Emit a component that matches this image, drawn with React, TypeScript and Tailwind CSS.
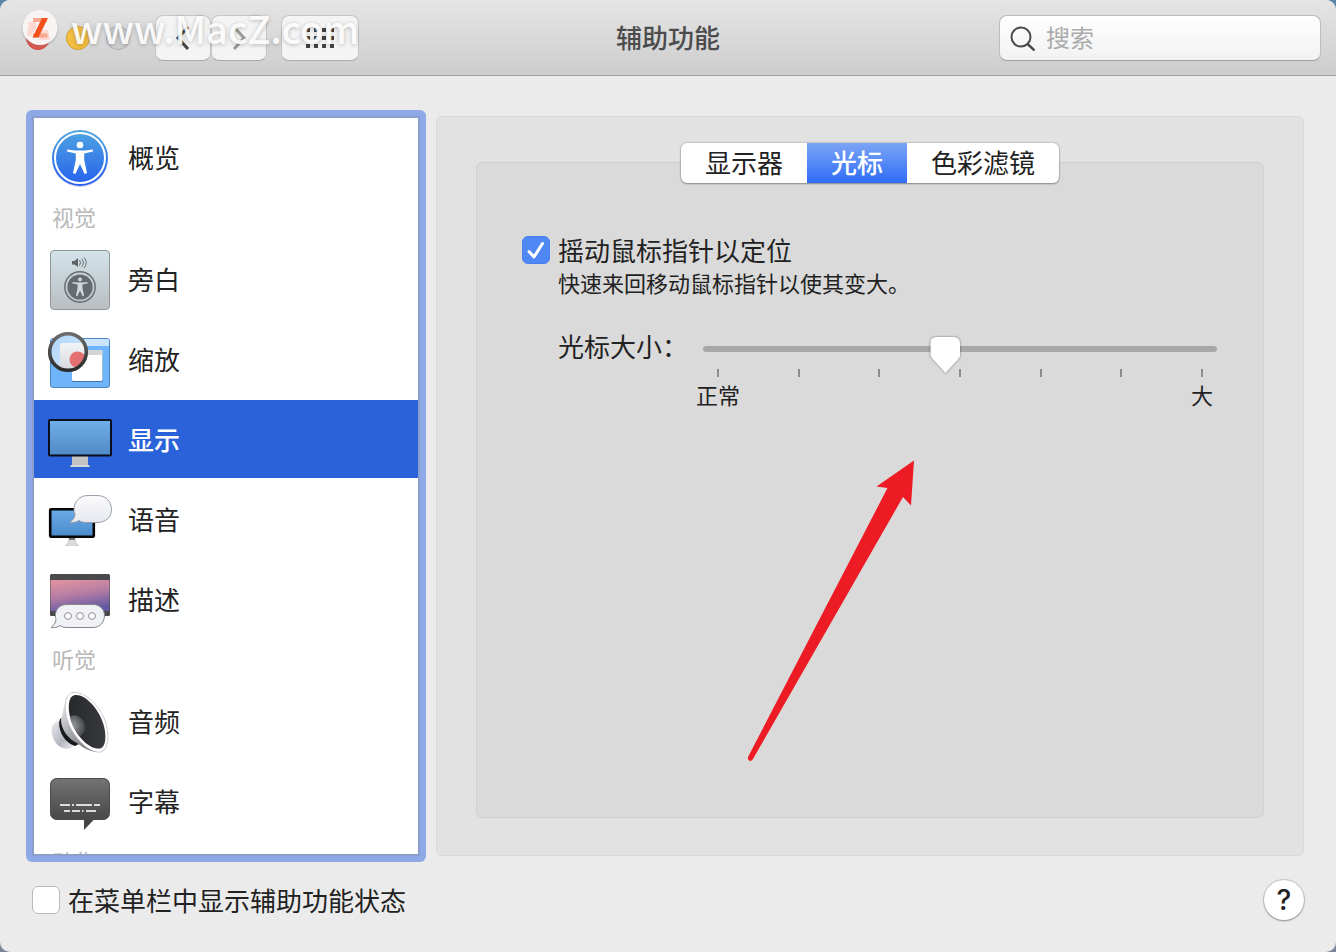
import { useState, type ReactNode } from "react";
import clsx from "clsx";

// Accessibility figure shared by the overview and voice-over icons, centred on 0,0.
function Figure({ fill }: { fill: string }) {
  return (
    <g fill={fill}>
      <circle cx="0" cy="-13" r="3.3" />
      <path d="M-13 -8.6 L-5 -7.6 H5 L13 -8.6 V-6.4 L4.2 -4.4 V2 L7 15 L4.6 16 L0 6 L-4.6 16 L-7 15 L-4.2 2 V-4.4 L-13 -6.4Z" />
    </g>
  );
}

function Icon({ children }: { children: ReactNode }) {
  return (
    <svg viewBox="0 0 64 64" fill="none" className="size-16 flex-none" aria-hidden>
      {children}
    </svg>
  );
}

function OverviewIcon() {
  return (
    <Icon>
      <defs>
        <linearGradient id="ov" x1="0" y1="0" x2="0" y2="1">
          <stop offset="0" stopColor="#4fa5e0" />
          <stop offset="1" stopColor="#2560ee" />
        </linearGradient>
      </defs>
      <circle cx="32" cy="34" r="28" fill="#7d80e8" opacity="0.4" />
      <circle cx="32" cy="33" r="28" fill="url(#ov)" />
      <circle cx="32" cy="33" r="25" stroke="#fff" strokeWidth="2" />
      <g transform="translate(32 33)">
        <Figure fill="#fff" />
      </g>
    </Icon>
  );
}

function VoiceOverIcon() {
  return (
    <Icon>
      <defs>
        <linearGradient id="vo" x1="0" y1="0" x2="0" y2="1">
          <stop offset="0" stopColor="#d3e3ea" />
          <stop offset="1" stopColor="#b9bec1" />
        </linearGradient>
      </defs>
      <rect x="2.5" y="3.5" width="59" height="59" rx="3.5" fill="url(#vo)" stroke="#8e9699" />
      <path d="M24 14 H26.5 L30 11 V20 L26.5 17.5 H24Z" fill="#5d6568" />
      <path d="M31.5 13 Q33.5 15.7 31.5 18.5 M33.8 11.8 Q37 15.7 33.8 19.8 M36 10.5 Q40.5 15.7 36 21" stroke="#5d6568" strokeWidth="0.9" />
      <circle cx="32" cy="40" r="15.2" stroke="#656c6f" strokeWidth="1.4" />
      <circle cx="32" cy="40" r="12.6" fill="#656c6f" />
      <g transform="translate(32 40) scale(0.58)">
        <Figure fill="#d3dade" />
      </g>
    </Icon>
  );
}

function ZoomIcon() {
  return (
    <Icon>
      <defs>
        <linearGradient id="zr" x1="0" y1="0" x2="0" y2="1">
          <stop offset="0" stopColor="#6b6b6b" />
          <stop offset="1" stopColor="#2b2b2b" />
        </linearGradient>
        <linearGradient id="zl" x1="0" y1="0" x2="1" y2="1">
          <stop offset="0" stopColor="#a9d3fb" />
          <stop offset="1" stopColor="#d8e9fa" />
        </linearGradient>
        <linearGradient id="zw" x1="0" y1="0" x2="0" y2="1">
          <stop offset="0" stopColor="#f2f4f6" />
          <stop offset="1" stopColor="#d3d5da" />
        </linearGradient>
        <clipPath id="zc">
          <circle cx="20" cy="25" r="17" />
        </clipPath>
      </defs>
      <rect x="2.5" y="11.5" width="59" height="49" rx="2.5" fill="#6fb4f8" stroke="#4a86c4" />
      <path d="M3 19 V14 Q3 12 5 12 H59 Q61 12 61 14 V19Z" fill="#cbe4fd" />
      <rect x="24" y="24" width="31" height="31" rx="1.5" fill="#3d76b5" />
      <rect x="24" y="23" width="30.5" height="31" rx="1.5" fill="#fff" />
      <rect x="24" y="23" width="30.5" height="5" rx="1" fill="#d4d4d4" />
      <g clipPath="url(#zc)">
        <rect width="40" height="45" fill="url(#zl)" />
        <rect x="12" y="16" width="30" height="30" rx="3" fill="url(#zw)" />
        <circle cx="29.5" cy="32.5" r="8" fill="#e47072" />
      </g>
      <circle cx="20" cy="25" r="18.3" stroke="url(#zr)" strokeWidth="3.6" />
    </Icon>
  );
}

function DisplayIcon() {
  return (
    <Icon>
      <defs>
        <linearGradient id="di" x1="0" y1="0" x2="0" y2="1">
          <stop offset="0" stopColor="#70afea" />
          <stop offset="1" stopColor="#5089c6" />
        </linearGradient>
      </defs>
      <rect x="24" y="49" width="16" height="9" fill="#c4c4c4" />
      <path d="M23 58 H41 L42 60 H22Z" fill="#d6d6d6" />
      <rect x="1" y="13" width="62" height="35.5" rx="1" fill="url(#di)" stroke="#0b0e1c" strokeWidth="2" />
    </Icon>
  );
}

function SpeechIcon() {
  return (
    <Icon>
      <defs>
        <linearGradient id="sb" x1="0" y1="0" x2="0" y2="1">
          <stop offset="0" stopColor="#fbfbfc" />
          <stop offset="1" stopColor="#e6e8ee" />
        </linearGradient>
        <linearGradient id="sm" x1="0" y1="0" x2="0" y2="1">
          <stop offset="0" stopColor="#69aae8" />
          <stop offset="1" stopColor="#4c8bca" />
        </linearGradient>
      </defs>
      <path d="M21 51 H27 L28 56 L31 58.5 H17 L20 56Z" fill="#dcdcdc" stroke="#c2c2c2" strokeWidth="0.6" />
      <path d="M21 51 H27 V53 H21Z" fill="#777" />
      <rect x="2.2" y="22.2" width="43.6" height="27.6" rx="1" fill="url(#sm)" stroke="#050505" strokeWidth="2.6" />
      <path
        d="M40 8.5 H49 C58 8.5 63.5 14.5 63.5 22.5 C63.5 30 58 35.5 49 35.5 H39 C36 35.5 33 35 31 33.5 C28.5 35.2 25 36 21.5 35.5 C25 33 26.5 31 27 27.5 C26.3 25.5 26 24 26 22.5 C26 14.5 31.5 8.5 40 8.5Z"
        fill="url(#sb)"
        stroke="#8f96a0"
        strokeWidth="0.9"
      />
    </Icon>
  );
}

function DescriptionsIcon() {
  return (
    <Icon>
      <defs>
        <linearGradient id="de" x1="0.3" y1="0" x2="0.6" y2="1">
          <stop offset="0" stopColor="#dd919f" />
          <stop offset="0.45" stopColor="#b67da4" />
          <stop offset="1" stopColor="#5e57a2" />
        </linearGradient>
      </defs>
      <rect x="2" y="7" width="60" height="42" rx="1.5" fill="#4a4a4d" />
      <rect x="2.5" y="13" width="59" height="31" fill="url(#de)" />
      <path
        d="M19 37.5 H45 C52 37.5 56.5 42.5 56.5 48.5 C56.5 55 52 60.5 45 60.5 H19 C16 60.5 14 60 12 58.5 C9.5 60.5 6.5 61 3 60.5 C6 58 7.5 56 8 52.5 C7.5 51 7.3 50 7.3 48.5 C7.5 42 12 37.5 19 37.5Z"
        fill="#f0f1f5"
        stroke="#85878f"
      />
      <circle cx="20" cy="49" r="3.4" fill="#fff" stroke="#8d8d93" />
      <circle cx="32" cy="49" r="3.4" fill="#fff" stroke="#8d8d93" />
      <circle cx="44" cy="49" r="3.4" fill="#fff" stroke="#8d8d93" />
    </Icon>
  );
}

function AudioIcon() {
  return (
    <Icon>
      <defs>
        <linearGradient id="am" x1="0" y1="0" x2="1" y2="1">
          <stop offset="0" stopColor="#ececf0" />
          <stop offset="0.6" stopColor="#b4b5bf" />
          <stop offset="1" stopColor="#f2f2f4" />
        </linearGradient>
        <linearGradient id="ac" x1="0" y1="0" x2="0.7" y2="1">
          <stop offset="0" stopColor="#f5f5f6" />
          <stop offset="0.5" stopColor="#aeb0b4" />
          <stop offset="1" stopColor="#77797d" />
        </linearGradient>
        <linearGradient id="ad" x1="0" y1="0" x2="1" y2="0">
          <stop offset="0" stopColor="#1e1f21" />
          <stop offset="1" stopColor="#3b3c40" />
        </linearGradient>
        <radialGradient id="ab" cx="0.35" cy="0.4" r="0.7">
          <stop offset="0" stopColor="#9a9ca0" />
          <stop offset="1" stopColor="#3c3d41" />
        </radialGradient>
        <clipPath id="ak">
          <path d="M27 6 C37 5 50 19 55 34 C59 46 58 58 52 59.5 C42 61 29 48 23.500 33 C19 20 20 7 27 6Z" />
        </clipPath>
      </defs>
      <path d="M11 32 C5 34 3 37 3.5 43 C5 53 11 60 20 60 C23 60 25 58 26 56Z" fill="url(#am)" />
      <path d="M12 30 C9 37 14 53 27 57 L31 55 L16 28Z" fill="#18191b" />
      <path d="M18 8 C15 22 14 27 13 31 C13 40 20 50 29 54 C36 60 44 63 50 63Z" fill="url(#ac)" />
      <path d="M25 3.5 C37 2 52 17 57.5 33 C62 48 60 61.5 52.5 63 C41 64.5 26 49 20 33 C15 18 17 4.5 25 3.5Z" fill="#fff" stroke="#b5b7ba" strokeWidth="0.7" />
      <g clipPath="url(#ak)">
        <rect width="64" height="64" fill="url(#ad)" />
        <ellipse cx="28" cy="37" rx="9" ry="11" transform="rotate(-27 28 37)" fill="url(#ab)" />
      </g>
    </Icon>
  );
}

function CaptionsIcon() {
  return (
    <Icon>
      <defs>
        <linearGradient id="cp" x1="0" y1="0" x2="0" y2="1">
          <stop offset="0" stopColor="#737373" />
          <stop offset="1" stopColor="#484848" />
        </linearGradient>
      </defs>
      <path d="M36 50 V61 L46.5 50Z" fill="#454545" />
      <rect x="2.5" y="9.5" width="59" height="41" rx="6" fill="url(#cp)" stroke="#4b4b4b" />
      <path d="M12 36 H22 M24 36 H26 M28 36 H44 M46 36 H52 M16 42 H22 M24 42 H32 M34 42 H35.5 M38 42 H48" stroke="#dcdcdc" strokeWidth="2" />
    </Icon>
  );
}

const sections: { title?: string; items: { name: string; icon: ReactNode }[] }[] = [
  { items: [{ name: "概览", icon: <OverviewIcon /> }] },
  {
    title: "视觉",
    items: [
      { name: "旁白", icon: <VoiceOverIcon /> },
      { name: "缩放", icon: <ZoomIcon /> },
      { name: "显示", icon: <DisplayIcon /> },
      { name: "语音", icon: <SpeechIcon /> },
      { name: "描述", icon: <DescriptionsIcon /> },
    ],
  },
  {
    title: "听觉",
    items: [
      { name: "音频", icon: <AudioIcon /> },
      { name: "字幕", icon: <CaptionsIcon /> },
    ],
  },
  // Scrolled out of view apart from the top of its heading.
  { title: "动作", items: [] },
];

const TABS = ["显示器", "光标", "色彩滤镜"];

const toolButton =
  "flex h-[46px] items-center justify-center rounded-lg border border-[#c6c6c6] border-b-[#aaa] bg-[#f4f4f4]";

function Toolbar() {
  return (
    <header className="relative grid h-19 flex-none grid-cols-[1fr_auto_1fr] items-center border-b border-[#a4a4a4] bg-linear-to-b from-[#e5e5e5] to-[#cdcdcd] px-[15px]">
      <div className="flex items-center pl-[11px]">
        <div className="flex gap-4">
          <button aria-label="关闭" className="size-6 rounded-full border border-[#c9493f] bg-[#e0574e]" />
          <button aria-label="最小化" className="size-6 rounded-full border border-[#d3a02f] bg-[#f4bf42]" />
          <button aria-label="缩放窗口" className="size-6 rounded-full border border-[#b0b0b0] bg-[#cfcfcf]" />
        </div>
        <button aria-label="后退" className={clsx(toolButton, "ml-[25px] w-14")}>
          <svg viewBox="0 0 16 24" className="h-6 w-4" fill="none" stroke="#444" strokeWidth="3" aria-hidden>
            <path d="M13 1 L3 12 L13 23" />
          </svg>
        </button>
        <button aria-label="前进" className={clsx(toolButton, "w-14")}>
          <svg viewBox="0 0 16 24" className="h-6 w-4" fill="none" stroke="#9a9a9a" strokeWidth="3" aria-hidden>
            <path d="M3 1 L13 12 L3 23" />
          </svg>
        </button>
        <button aria-label="显示全部" className={clsx(toolButton, "ml-3.5 w-[78px]")}>
          <svg viewBox="0 0 28 20" className="h-5 w-7" fill="none" stroke="#444" strokeWidth="4" strokeDasharray="4 4" aria-hidden>
            <path d="M0 2 H28 M0 10 H28 M0 18 H28" />
          </svg>
        </button>
      </div>
      <h1 className="pb-0.5 text-[26px] leading-8 font-medium text-[#4c4c4c]">辅助功能</h1>
      <label className="flex h-[46px] w-[322px] items-center gap-2.5 justify-self-end rounded-lg border border-[#bdbdbd] border-b-[#a0a0a0] bg-linear-to-b from-white to-[#f2f2f2] pl-2.5">
        <svg viewBox="0 0 26 26" className="size-[26px] flex-none" fill="none" stroke="#4a4a4a" strokeWidth="2" aria-hidden>
          <circle cx="11" cy="12" r="9.5" />
          <path d="M17.5 19 L24.5 25.5" strokeWidth="2.4" />
        </svg>
        <input
          type="text"
          aria-label="搜索"
          placeholder="搜索"
          className="min-w-0 flex-1 bg-transparent pb-0.5 text-2xl outline-none placeholder:text-[#ababab]"
        />
      </label>
      <Watermark />
    </header>
  );
}

function Watermark() {
  return (
    <div className="pointer-events-none absolute top-1 left-5 flex items-center gap-[11px]">
      <svg viewBox="0 0 40 48" className="h-12 w-10" fill="none" aria-hidden>
        <circle cx="20" cy="25" r="18.5" fill="#777" opacity="0.2" />
        <circle cx="20" cy="23.5" r="17.5" fill="#f7f4f3" />
        <path d="M9 18 H16 V24 L11 32 H7Z M19 26 H28 L30 36 H20Z" fill="#fbd9d2" />
        <path d="M13 14 H27 V18 H13Z M13 29.5 H27.5 V33.5 H13Z" fill="#f9a78e" />
        <path d="M22 14 H28 L18.5 33.5 H12.5Z" fill="#f5511e" />
      </svg>
      <span className="font-['Noto_Sans_CJK_SC',sans-serif] text-[38px] leading-12 font-medium text-white/90 [text-shadow:0_1px_4px_rgb(0_0_0/0.25)]">
        www.MacZ.com
      </span>
    </div>
  );
}

function Sidebar() {
  const [current, setCurrent] = useState("显示");

  return (
    <nav className="w-[400px] flex-none rounded-md bg-[#8ea9e6] p-1.5">
      <div className="h-full overflow-hidden border-2 border-[#8c9fca] bg-white">
        {sections.map((section, i) => (
          <section key={i}>
            {section.title && <h2 className="h-[42px] pl-4.5 text-[22px] leading-9 text-[#b9b9b9]">{section.title}</h2>}
            <ul>
              {section.items.map(({ name, icon }) => (
                <li key={name} className="h-20">
                  <button
                    onClick={() => setCurrent(name)}
                    className={clsx(
                      "flex h-[78px] w-full items-center gap-4 pl-3.5 text-[26px]",
                      current === name ? "bg-[#2a63d9] font-medium text-white" : "text-[#222]",
                    )}
                  >
                    {icon}
                    <span className="pb-0.5">{name}</span>
                  </button>
                </li>
              ))}
            </ul>
          </section>
        ))}
      </div>
    </nav>
  );
}

function Checkbox({ id, defaultChecked }: { id: string; defaultChecked?: boolean }) {
  return (
    <span className="grid flex-none">
      <input
        id={id}
        type="checkbox"
        defaultChecked={defaultChecked}
        className="peer col-start-1 row-start-1 size-7 appearance-none rounded-md border border-[#bcbcbc] bg-white checked:border-[#4a80ee] checked:bg-[#4f87f5]"
      />
      <svg
        viewBox="0 0 28 28"
        className="pointer-events-none invisible col-start-1 row-start-1 size-7 peer-checked:visible"
        fill="none"
        stroke="#fff"
        strokeWidth="3"
        strokeLinecap="round"
        strokeLinejoin="round"
        aria-hidden
      >
        <path d="M7 15.5 L12 21 L20.5 7.5" />
      </svg>
    </span>
  );
}

function CursorSize() {
  return (
    <div className="flex gap-[15px] pr-[46px] pl-[81px]">
      <label htmlFor="cursor-size" className="text-[26px] leading-8">
        光标大小：
      </label>
      <div className="min-w-0 flex-1">
        <div className="grid items-center pt-[7px]">
          <div className="col-start-1 row-start-1 mb-3 h-1.5 rounded-full bg-[#a8a8a8]" />
          {/* The shadow sits on the input because the thumb itself is clipped to a pointer. */}
          <input
            id="cursor-size"
            type="range"
            defaultValue={47}
            className="col-start-1 row-start-1 h-9 w-full appearance-none bg-transparent drop-shadow-[0_0_1px_rgb(0_0_0/0.5)] [&::-webkit-slider-thumb]:h-9 [&::-webkit-slider-thumb]:w-[30px] [&::-webkit-slider-thumb]:appearance-none [&::-webkit-slider-thumb]:rounded-md [&::-webkit-slider-thumb]:bg-white [&::-webkit-slider-thumb]:[clip-path:polygon(0_0,100%_0,100%_52%,92%_62%,50%_100%,8%_62%,0_52%)]"
          />
        </div>
        <div className="-mt-1 flex justify-between px-3.5">
          {Array.from({ length: 7 }).map((_, i) => (
            <span key={i} className="h-2 w-0.5 bg-[#8c8c8c]" />
          ))}
        </div>
        <div className="-mx-[7px] mt-px flex justify-between text-[22px] leading-8">
          <span className="w-11 text-center">正常</span>
          <span className="w-11 text-center">大</span>
        </div>
      </div>
    </div>
  );
}

function Arrow() {
  return (
    <svg viewBox="0 0 168 302" className="pointer-events-none absolute top-[297px] left-[270px] h-[302px] w-[168px]" aria-hidden>
      <path
        d="M167 0.5 L129.5 26.5 L140.5 28 L1 297 Q0.5 300 3 301 Q5 301 6 299 L156 37 L164 45.5Z"
        fill="#ed1c24"
      />
    </svg>
  );
}

function DisplayPanel() {
  const [tab, setTab] = useState("光标");

  return (
    <main className="my-1.5 flex min-w-0 flex-1 flex-col rounded-md border border-[#d8d8d8] bg-[#e2e2e2] px-[39px] pt-[26px] pb-[37px]">
      <div role="tablist" className="z-10 -mb-[21px] flex h-10 self-center overflow-hidden rounded-md bg-white shadow-[0_0_1px_1px_rgb(0_0_0/0.12),0_1px_2px_rgb(0_0_0/0.3)]">
        {TABS.map((name) => (
          <button
            key={name}
            role="tab"
            aria-selected={tab === name}
            onClick={() => setTab(name)}
            className={clsx(
              "px-6 pb-0.5 text-[26px] leading-9",
              tab === name && "bg-linear-to-b from-[#7ba4f5] to-[#2f6bf6] font-medium text-white",
            )}
          >
            {name}
          </button>
        ))}
      </div>
      <div role="tabpanel" className="relative flex-1 rounded-md border border-[#d0d0d0] bg-[#dadada] pt-[71px]">
        <div className="flex items-center gap-2 pl-[45px]">
          <Checkbox id="shake" defaultChecked />
          <label htmlFor="shake" className="text-[26px] leading-8">
            摇动鼠标指针以定位
          </label>
        </div>
        <p className="mb-8 pl-[81px] text-[22px] leading-8">快速来回移动鼠标指针以使其变大。</p>
        <CursorSize />
        <Arrow />
      </div>
    </main>
  );
}

export default function App() {
  return (
    <div className="h-screen bg-linear-to-b from-[#5f87a8] to-[#7d8499]">
      <div className="flex h-full flex-col overflow-hidden rounded-[10px] bg-[#ebebeb] font-['Noto_Sans_CJK_SC',sans-serif] text-[#222]">
        <Toolbar />
        <div className="flex min-h-0 flex-1 gap-2.5 pt-[34px] pr-8 pl-[26px]">
          <Sidebar />
          <DisplayPanel />
        </div>
        <footer className="mb-3.5 flex h-19 flex-none items-center gap-2 px-8">
          <Checkbox id="menu-bar" />
          <label htmlFor="menu-bar" className="text-[26px] leading-8">
            在菜单栏中显示辅助功能状态
          </label>
          <button
            aria-label="帮助"
            className="ml-auto size-10 rounded-full bg-white font-[Inter,sans-serif] text-[28px] leading-10 font-medium shadow-[0_0_1px_1px_rgb(0_0_0/0.15),0_1px_2px_rgb(0_0_0/0.3)]"
          >
            ?
          </button>
        </footer>
      </div>
    </div>
  );
}
